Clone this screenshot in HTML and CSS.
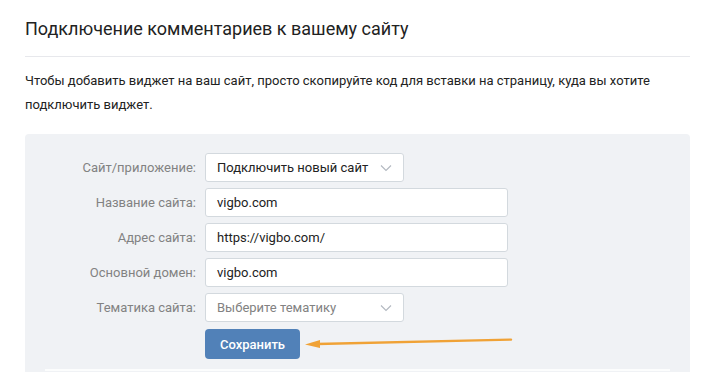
FILE: index.html
```html
<!DOCTYPE html>
<html lang="ru">
<head>
<meta charset="utf-8">
<link rel="stylesheet" href="styles.css">
</head>
<body>
<div class="page">
  <h1 class="title">Подключение комментариев к вашему сайту</h1>
  <p class="intro">Чтобы добавить виджет на ваш сайт, просто скопируйте код для вставки на страницу, куда вы хотите подключить виджет.</p>
  <div class="panel">
    <div class="form">
      <div class="row">
        <div class="label">Сайт/приложение:</div>
        <div class="select"><span>Подключить новый сайт</span><svg class="chev" width="12" height="8" viewBox="0 0 12 8"><path d="M1 1.5l5 5 5-5" fill="none" stroke="#b2b8c0" stroke-width="1.1"/></svg></div>
      </div>
      <div class="row">
        <div class="label">Название сайта:</div>
        <div class="input">vigbo.com</div>
      </div>
      <div class="row">
        <div class="label">Адрес сайта:</div>
        <div class="input">https://vigbo.com/</div>
      </div>
      <div class="row">
        <div class="label">Основной домен:</div>
        <div class="input">vigbo.com</div>
      </div>
      <div class="row">
        <div class="label">Тематика сайта:</div>
        <div class="select placeholder"><span>Выберите тематику</span><svg class="chev" width="12" height="8" viewBox="0 0 12 8"><path d="M1 1.5l5 5 5-5" fill="none" stroke="#b2b8c0" stroke-width="1.1"/></svg></div>
      </div>
      <div class="row">
        <div class="label"></div>
        <div class="btnwrap">
          <button class="btn">Сохранить</button>
          <svg class="arrow" width="210" height="16" viewBox="0 0 210 16"><path d="M14 10 L208 5.6" stroke="#f0a236" stroke-width="2.4" stroke-linecap="round" fill="none"/><path d="M2 10.4 L17 6 L17 14 Z" fill="#f0a236"/></svg>
        </div>
      </div>
    </div>
    <div class="divider"></div>
  </div>
</div>
</body>
</html>
```
FILE: styles.css
```css
html, body {
  margin: 0;
  padding: 0;
  background: #ffffff;
}
body {
  font-family: Roboto, "Noto Sans", Arial, sans-serif;
  color: #222222;
}
.page {
  padding: 0 26px 0 25px;
}
.title {
  margin: 0;
  padding-top: 17px;
  height: 39px;
  font-size: 18px;
  font-weight: 400;
  line-height: 24px;
  color: #222;
  border-bottom: 1px solid #e7e8ec;
  box-sizing: content-box;
}
.intro {
  margin: 0;
  padding: 12px 0 17px;
  font-size: 13px;
  line-height: 24px;
  color: #222;
  max-width: 640px;
}
.panel {
  background: #f0f2f5;
  border-radius: 4px 4px 0 0;
  padding: 19px 0 0;
  height: 220px;
  overflow: hidden;
}
.form {
  display: flex;
  flex-direction: column;
  gap: 6px;
}
.row {
  display: flex;
  align-items: center;
  gap: 9px;
}
.label {
  width: 171px;
  text-align: right;
  font-size: 13px;
  color: #828282;
  flex: none;
}
.select, .input {
  box-sizing: border-box;
  height: 29px;
  background: #fff;
  border: 1px solid #d3d9de;
  border-radius: 3px;
  font-size: 13px;
  color: #222;
  display: flex;
  align-items: center;
  padding: 0 11px 0 11px;
}
.select {
  width: 199px;
  justify-content: space-between;
}
.select.placeholder span {
  color: #828282;
}
.input {
  width: 303px;
}
.chev {
  display: block;
  margin-top: 1px;
}
.btnwrap {
  display: flex;
  align-items: center;
  gap: 3px;
  padding-top: 1px;
}
.btn {
  width: 95px;
  height: 30px;
  background: #5181b8;
  color: #fff;
  border: none;
  border-radius: 4px;
  font-family: inherit;
  font-size: 13px;
  font-weight: 500;
  padding: 0;
}
.arrow {
  display: block;
  margin-top: -4px;
}
.divider {
  margin: 10px 20px 0 20px;
  height: 2px;
  background: #ffffff;
  opacity: 0.8;
}
```
